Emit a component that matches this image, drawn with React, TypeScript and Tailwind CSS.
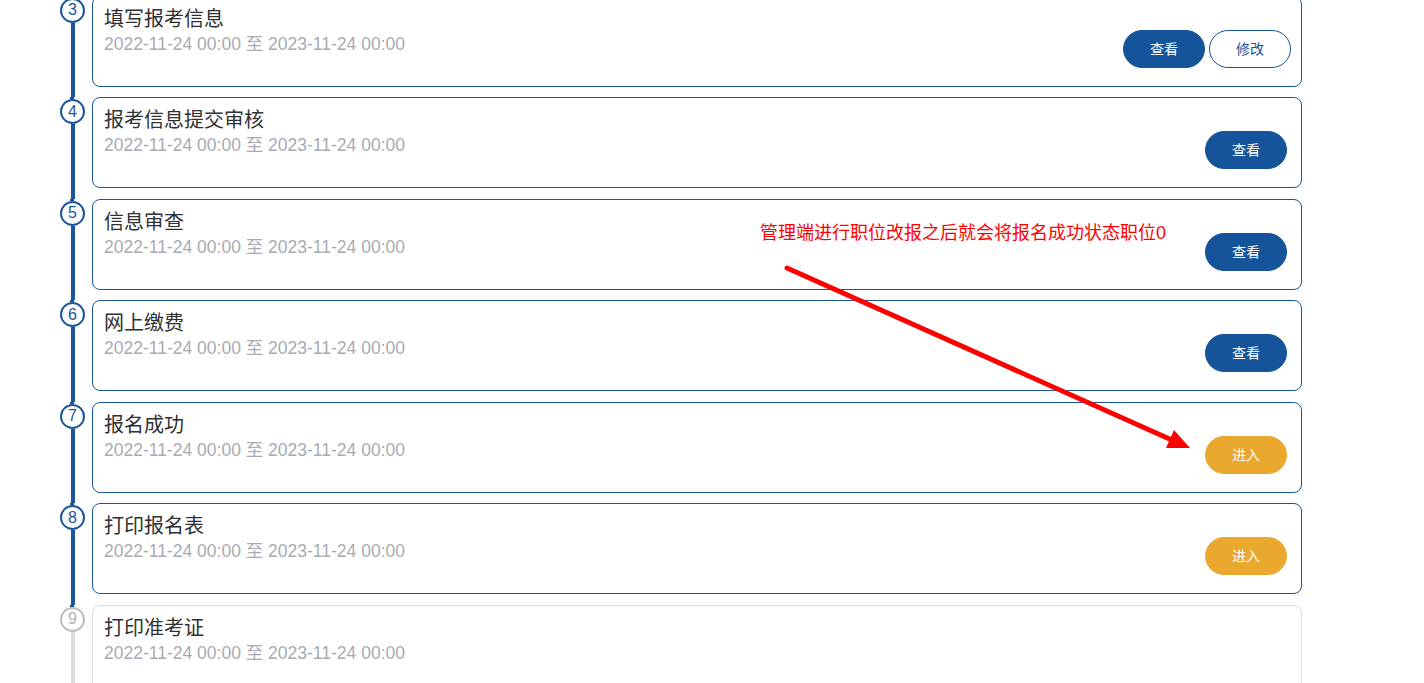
import React from 'react'

type Btn = { label: string; kind: 'primary' | 'outline' | 'warn' }

interface Step {
  no: number
  title: string
  start: string
  end: string
  buttons: Btn[]
  done: boolean
}

const steps: Step[] = [
  { no: 3, title: '填写报考信息', start: '2022-11-24 00:00', end: '2023-11-24 00:00', buttons: [{ label: '查看', kind: 'primary' }, { label: '修改', kind: 'outline' }], done: true },
  { no: 4, title: '报考信息提交审核', start: '2022-11-24 00:00', end: '2023-11-24 00:00', buttons: [{ label: '查看', kind: 'primary' }], done: true },
  { no: 5, title: '信息审查', start: '2022-11-24 00:00', end: '2023-11-24 00:00', buttons: [{ label: '查看', kind: 'primary' }], done: true },
  { no: 6, title: '网上缴费', start: '2022-11-24 00:00', end: '2023-11-24 00:00', buttons: [{ label: '查看', kind: 'primary' }], done: true },
  { no: 7, title: '报名成功', start: '2022-11-24 00:00', end: '2023-11-24 00:00', buttons: [{ label: '进入', kind: 'warn' }], done: true },
  { no: 8, title: '打印报名表', start: '2022-11-24 00:00', end: '2023-11-24 00:00', buttons: [{ label: '进入', kind: 'warn' }], done: true },
  { no: 9, title: '打印准考证', start: '2022-11-24 00:00', end: '2023-11-24 00:00', buttons: [], done: false }
]

const font = { fontFamily: '"Liberation Sans", "Noto Sans CJK SC", sans-serif' }

function StepButton({ btn }: { btn: Btn }) {
  const cls =
    btn.kind === 'primary'
      ? 'bg-[#15539a] text-white border-[#15539a]'
      : btn.kind === 'outline'
        ? 'bg-white text-[#15539a] border-[#15539a]'
        : 'bg-[#eaa82f] text-white border-[#eaa82f]'
  return (
    <button className={`w-[82px] h-[38px] rounded-full border text-[14px] leading-none ${cls}`}>
      {btn.label}
    </button>
  )
}

function StepRow({ step }: { step: Step }) {
  const lineColor = step.done ? 'bg-[#1b559b]' : 'bg-[#dcdcdc]'
  const two = step.buttons.length > 1
  return (
    <div className="flex h-[101.5px]">
      {/* 时间轴 */}
      <div className="w-[32px] flex flex-col items-start">
        <div className="w-[24px] flex justify-center">
          <div className="w-[4px] h-[2px] bg-[#1b559b]"></div>
        </div>
        <div
          className={`w-[25px] h-[25px] shrink-0 rounded-full border-2 bg-white flex items-center justify-center text-[16px] leading-none ${
            step.done ? 'border-[#1b559b] text-[#1b559b]' : 'border-[#bdbdbd] text-[#b0b0b0]'
          }`}
        >
          {step.no}
        </div>
        <div className="w-[25px] flex-1 flex justify-center">
          <div className={`w-[4px] h-full ${lineColor}`}></div>
        </div>
      </div>

      {/* 卡片 */}
      <div
        className={`w-[1210px] h-[91px] rounded-[8px] border bg-white flex justify-between ${
          step.done ? 'border-[#1b559b]' : 'border-[#dcdfe6]'
        }`}
      >
        <div className="pl-[11px] pt-[10px]">
          <div className="text-[20px] leading-[24px] text-[#303133]">{step.title}</div>
          <div className="text-[17.5px] leading-[26px] text-[#a8abb2]">
            {step.start} 至 {step.end}
          </div>
        </div>
        {step.buttons.length > 0 && (
          <div className={`self-end mb-[18px] flex gap-[4px] ${two ? 'mr-[10px]' : 'mr-[14px]'}`}>
            {step.buttons.map((b, i) => (
              <StepButton key={i} btn={b} />
            ))}
          </div>
        )}
      </div>
    </div>
  )
}

export default function App() {
  return (
    <div className="relative w-[1424px] h-screen overflow-hidden bg-white" style={font}>
      <div className="pl-[60px] -mt-[4.5px]">
        {steps.map((s) => (
          <StepRow key={s.no} step={s} />
        ))}
      </div>

      {/* 标注 */}
      <div className="absolute left-[760px] top-[221px] text-[18px] leading-[24px] text-[#ff0000] whitespace-nowrap">
        管理端进行职位改报之后就会将报名成功状态职位0
      </div>
      <svg className="absolute left-0 top-0 pointer-events-none" width="1424" height="683">
        <line x1="787" y1="268" x2="1174" y2="441" stroke="#ff0000" strokeWidth="5" strokeLinecap="round" />
        <polygon points="1190,448 1174,430 1166,448" fill="#ff0000" />
      </svg>
    </div>
  )
}
